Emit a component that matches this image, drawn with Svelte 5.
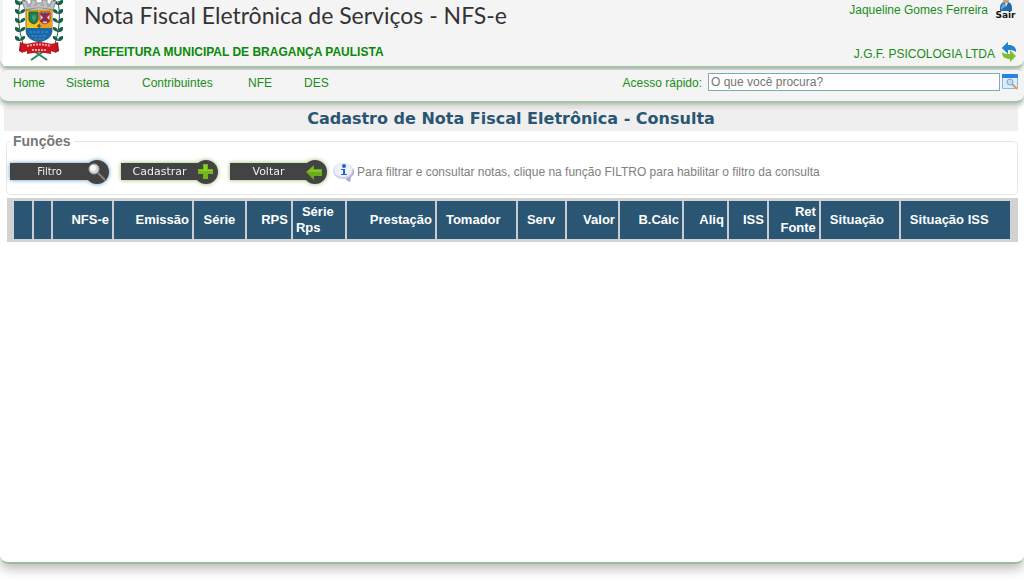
<script lang="ts">
  const menu = [
    { label: 'Home', width: 53 },
    { label: 'Sistema', width: 76 },
    { label: 'Contribuintes', width: 106 },
    { label: 'NFE', width: 56 },
    { label: 'DES', width: 60 },
  ];

  const columns = [
    { label: '', width: 19, align: 'right' },
    { label: '', width: 19, align: 'right' },
    { label: 'NFS-e', width: 61, align: 'right' },
    { label: 'Emissão', width: 80, align: 'right' },
    { label: 'Série', width: 53, align: 'center' },
    { label: 'RPS', width: 46, align: 'right' },
    { label: 'Série Rps', width: 54, align: 'wrapped' },
    { label: 'Prestação', width: 90, align: 'right' },
    { label: 'Tomador', width: 81, align: 'left' },
    { label: 'Serv', width: 49, align: 'left' },
    { label: 'Valor', width: 53, align: 'right' },
    { label: 'B.Cálc', width: 64, align: 'right' },
    { label: 'Aliq', width: 45, align: 'right' },
    { label: 'ISS', width: 40, align: 'right' },
    { label: 'Ret Fonte', width: 52, align: 'right' },
    { label: 'Situação', width: 80, align: 'left' },
    { label: 'Situação ISS', width: 110, align: 'left' },
  ];

  const total = columns.reduce((sum, c) => sum + c.width, 0);

  let search = $state('');
</script>

<div class="page">
  <header class="top">
    <div class="logo">
      <svg viewBox="0 0 48 62" width="48" height="62" role="img" aria-label="Brasão de Bragança Paulista">
        <g fill="none" stroke="#23614a" stroke-width="1">
          <path d="M5 1Q1 22 8 44M43 1Q47 22 40 44" />
        </g>
        <g fill="#176048">
          {#each [3, 12, 21, 30, 39] as y}
            <path d="M5 {y + 2}q-6 0-5-5q5 0 5 5q0-5 5-5q1 4-5 5zM43 {y + 2}q6 0 5-5q-5 0-5 5q0-5-5-5q-1 4 5 5z" />
          {/each}
        </g>
        <g fill="#bfc1c2" stroke="#8b8d8f" stroke-width="1">
          <path d="M7 1h5v3h4V0h5v3h6V0h5v4h4V1h5l-3 9q-14-4-28 0z" />
          <path d="M12 6h4M19 5h3M26 5h3M32 6h4" />
        </g>
        <path d="M11 10h26v21q0 8-13 11Q11 39 11 31z" fill="#f4c514" stroke="#80754e" />
        <path d="M24 10h13v18H24z" fill="#ee9f16" />
        <path d="M11 28h26v4q-1 8-13 10Q12 40 11 32z" fill="#1769ad" />
        <path d="M14 32h20M16 36h16M19 39h10" stroke="#4c8dbb" stroke-dasharray="3 1" />
        <path d="M14 12h9v8q-1 3-4 4-4-1-5-4z" fill="#168354" stroke="#454d39" />
        <path d="M17 16h1v-1h2v1h1v3h-1v2h-2v-2h-1z" fill="#4c9a6a" />
        <path d="M25 12h10v8q-1 3-5 4-4-1-5-4z" fill="#d5d8de" stroke="#9c3947" />
        <path d="m26 13 8 9m0-9-8 9" stroke="#a82038" stroke-width="3" />
        <path d="m30 12 2 2-2 2-2-2zm0 6 2 2-2 2-2-2z" fill="#334d78" />
        <path d="M24 24v5m-2-3h4" stroke="#343d3e" stroke-width="1" />
        <path d="m16 60 16-11m-16 0 16 11" stroke="#268761" stroke-width="2" />
        <path d="m5 42-1 9 4 2 2-8zm38 0 1 9-4 2-2-8z" fill="#941019" />
        <path d="M5 42q5 3 11 1 8-2 16 0 6 2 11-1l-1 9q-3 2-6 0v3q-12-3-24 0v-3q-3 2-6 0z" fill="#c91620" />
        <path d="M12 46q12-3 24 0M17 50h14" stroke="#f0a5a5" stroke-width="2" stroke-dasharray="2 1" fill="none" />
      </svg>
    </div>
    <div class="names">
      <h1>Nota Fiscal Eletrônica de Serviços - NFS-e</h1>
      <p class="city">PREFEITURA MUNICIPAL DE BRAGANÇA PAULISTA</p>
    </div>
    <div class="account">
      <div class="user">
        <span>Jaqueline Gomes Ferreira</span>
        <button class="logout">
          <svg viewBox="0 0 18 11" width="18" height="11" aria-hidden="true">
            <circle cx="9" cy="0" r="3" fill="#d29b6a" />
            <path d="M3 11V8q0-5 4-6l2 2 2-2q4 1 4 6v3z" fill="#246aa8" />
            <path d="M4 10V8q1-4 3-5l2 3z" fill="#6ba5d2" />
            <path d="m8 3 1 4 2-4z" fill="#c8deed" />
          </svg>
          <span>Sair</span>
        </button>
      </div>
      <div class="company">
        <span>J.G.F. PSICOLOGIA LTDA</span>
        <button class="swap" aria-label="Trocar empresa">
          <svg viewBox="0 0 16 20" width="16" height="20">
            <path d="M1 6 7 0v3c5 0 8 2 8 7-2-2-4-2-8-2v4z" fill="#2383cb" />
            <path d="m15 14-6 6v-3c-5 0-8-2-8-7 2 2 4 2 8 2V8z" fill="#7dbe2c" />
            <path d="M1 6 7 0v3c5 0 8 2 8 7-2-2-4-2-8-2v3z" fill="#2383cb" />
          </svg>
        </button>
      </div>
    </div>
  </header>

  <nav class="menubar">
    <ul>
      {#each menu as item}
        <li style:width="{item.width}px"><a href="#menu">{item.label}</a></li>
      {/each}
    </ul>
    <form class="search">
      <label for="quick">Acesso rápido:</label>
      <input id="quick" type="text" placeholder="O que você procura?" bind:value={search} />
      <button type="button" aria-label="Procurar">
        <svg viewBox="0 0 16 16" width="16" height="16">
          <rect x="0" y="0" width="16" height="15" rx="1" fill="#8ab8ea" />
          <path d="M1 4h14v10H1z" fill="#dcecf9" />
          <path d="M0 0h16v4H0z" fill="#2d81dc" />
          <path d="m10 10 5 5" stroke="#e29a61" stroke-width="2" />
          <circle cx="8" cy="8" r="3" fill="#b7dff3" stroke="#83a9c4" />
        </svg>
      </button>
    </form>
  </nav>

  <main>
    <h2>Cadastro de Nota Fiscal Eletrônica - Consulta</h2>

    <fieldset>
      <legend>Funções</legend>
      <div class="actions">
        <button class="action blue">
          <span>Filtro</span>
          <svg viewBox="0 0 24 24" width="24" height="24" aria-hidden="true">
            <circle cx="12" cy="12" r="12" fill="#434343" />
            <path d="m13 13 7 7" stroke="#858585" stroke-width="2" />
            <circle cx="9" cy="9" r="5" fill="#d7d7d7" stroke="#a6a6a6" />
            <circle cx="8" cy="8" r="3" fill="#f7f7f7" />
          </svg>
        </button>
        <button class="action">
          <span>Cadastrar</span>
          <svg viewBox="0 0 24 24" width="24" height="24" aria-hidden="true">
            <circle cx="12" cy="12" r="12" fill="#434343" />
            <path d="M9 4h5v5h5v5h-5v5H9v-5H4V9h5z" fill="#72b61b" />
            <path d="M10 5h3v5h5v1H5v-1h5z" fill="#91ce2b" />
          </svg>
        </button>
        <button class="action">
          <span>Voltar</span>
          <svg viewBox="0 0 24 24" width="24" height="24" aria-hidden="true">
            <circle cx="12" cy="12" r="12" fill="#434343" />
            <path d="m3 12 8-7v4h8v7h-8v4z" fill="#68ad18" />
            <path d="m4 12 6-5v3h8v2z" fill="#86c42c" />
          </svg>
        </button>
        <p class="hint">
          <svg viewBox="0 0 22 20" width="22" height="20" aria-hidden="true">
            <path d="M12 15q6-2 8-9 3 6-2 9l-1 5q-4-1-5-5z" fill="#a9a7d0" />
            <ellipse cx="10" cy="9" rx="10" ry="8" fill="#cdd2ea" />
            <ellipse cx="10" cy="8" rx="9" ry="7" fill="#edf0fb" />
            <circle cx="11" cy="4" r="2" fill="#2464c0" />
            <path d="M8 7h4v5h2v1H8v-1h2V8H8z" fill="#2464c0" />
          </svg>
          <span>Para filtrar e consultar notas, clique na função FILTRO para habilitar o filtro da consulta</span>
        </p>
      </div>
    </fieldset>

    <div class="grid">
      <table>
        <colgroup>
          {#each columns as col}
            <col style:width="{(col.width / total) * 100}%" />
          {/each}
        </colgroup>
        <thead>
          <tr>
            {#each columns as col}
              <th class={col.align} scope="col">{col.label}</th>
            {/each}
          </tr>
        </thead>
      </table>
    </div>
  </main>
</div>

<style>
  :global(body) {
    margin: 0;
    background: #fff;
  }

  .page {
    box-sizing: border-box;
    min-height: 100vh;
    padding-bottom: 19px;
    overflow: hidden;
    display: flex;
    flex-direction: column;
    font-family: "Liberation Sans", Arial, sans-serif;
    font-size: 12px;
    color: #1a8c1a;
  }

  button {
    border: 0;
    padding: 0;
    background: none;
    font: inherit;
    cursor: pointer;
  }

  svg {
    display: block;
    flex: none;
  }

  .top,
  .menubar {
    background: #f4f4f4;
    border-bottom: 2px solid #a3c4a6;
    box-sizing: border-box;
    position: relative;
    box-shadow: 0 3px 5px #bbb;
  }

  .top {
    display: flex;
    height: 68px;
    border-radius: 0 0 8px 8px;
  }

  .logo {
    width: 72px;
    margin-left: 3px;
    background: #fff;
    display: flex;
    justify-content: center;
  }

  .names {
    margin-left: 9px;
    flex: 1;
  }

  h1 {
    margin: 0;
    font: 400 23px/30px "Century Gothic", Lato, sans-serif;
    color: #333;
    white-space: nowrap;
  }

  .city {
    margin: 14px 0 0;
    font-weight: bold;
    line-height: 16px;
    color: #098909;
    white-space: nowrap;
  }

  .account {
    display: flex;
    flex-direction: column;
    align-items: flex-end;
    justify-content: space-between;
    padding: 0 7px 4px 0;
    white-space: nowrap;
  }

  .user,
  .company {
    display: flex;
    gap: 6px;
    align-items: center;
  }

  .user {
    height: 19px;
  }

  .company {
    align-items: flex-end;
    line-height: 16px;
  }

  .logout {
    width: 23px;
    height: 19px;
    display: flex;
    flex-direction: column;
    align-items: center;
    font: bold 9px/8px "DejaVu Sans", sans-serif;
    color: #151515;
  }

  .menubar {
    display: flex;
    justify-content: space-between;
    height: 33px;
    margin-top: 2px;
    border-radius: 8px;
    padding: 2px 6px 0 13px;
    line-height: 22px;
  }

  ul {
    display: flex;
    list-style: none;
    margin: 0;
    padding: 0;
  }

  a {
    color: inherit;
    text-decoration: none;
  }

  .search {
    display: flex;
    align-items: flex-start;
    gap: 6px;
  }

  .search input {
    width: 292px;
    height: 18px;
    box-sizing: border-box;
    margin: 1px 0 0;
    padding: 0 2px;
    border: 1px solid #79b0ad;
    background: #fff;
    font: 12px "Liberation Sans", sans-serif;
    color: #444;
  }

  .search input::placeholder {
    color: #757575;
  }

  .search button {
    margin: 2px 0 0 -4px;
  }

  main {
    flex: 1;
    padding: 4px 6px 0 4px;
    border-bottom: 2px solid #98bf9c;
    border-radius: 0 0 8px 8px;
    box-shadow: 0 5px 12px #bbb;
  }

  h2 {
    margin: 0;
    background: #efefef;
    color: #2a5573;
    font: bold 16px/24px Verdana, "DejaVu Sans", sans-serif;
    text-align: center;
  }

  fieldset {
    margin: 2px 0 0 2px;
    padding: 0 3px;
    border: 1px solid #e5e5e5;
    border-radius: 5px;
    min-width: 0;
  }

  legend {
    padding: 0 3px;
    font-size: 14px;
    font-weight: bold;
    line-height: 16px;
    color: #777;
  }

  .actions {
    display: flex;
    align-items: center;
    gap: 12px;
    height: 45px;
  }

  .action {
    display: flex;
    align-items: center;
    height: 24px;
    width: 97px;
    color: #eee;
    font: 11px/17px Verdana, "DejaVu Sans", sans-serif;
    filter: drop-shadow(0 0 2px #8dbb62);
  }

  .action.blue {
    width: 99px;
    font-size: 10px;
    filter: drop-shadow(0 0 2px #579aca);
  }

  .action span {
    flex: 1;
    height: 17px;
    margin-right: -12px;
    padding-right: 8px;
    background: #434343;
    text-align: center;
  }

  .action svg {
    position: relative;
  }

  .hint {
    display: flex;
    align-items: center;
    gap: 2px;
    margin: 0 0 0 -6px;
    color: #808080;
    white-space: nowrap;
  }

  .grid {
    margin: 3px 0 0 3px;
    padding: 3px 8px 3px 7px;
    background: #d2d2d2;
  }

  table {
    width: 100%;
    table-layout: fixed;
    border-collapse: collapse;
  }

  th {
    height: 38px;
    box-sizing: border-box;
    padding: 0 3px;
    border-right: 2px solid #c5cdd2;
    background: #2a5573;
    color: #fff;
    font-size: 13px;
    line-height: 16px;
    text-align: right;
  }

  th:last-child {
    border-right: 0;
  }

  th.left {
    text-align: left;
    padding-left: 9px;
  }

  th.center {
    text-align: center;
  }

  th.wrapped {
    text-align: left;
    text-indent: 6px;
  }
</style>
